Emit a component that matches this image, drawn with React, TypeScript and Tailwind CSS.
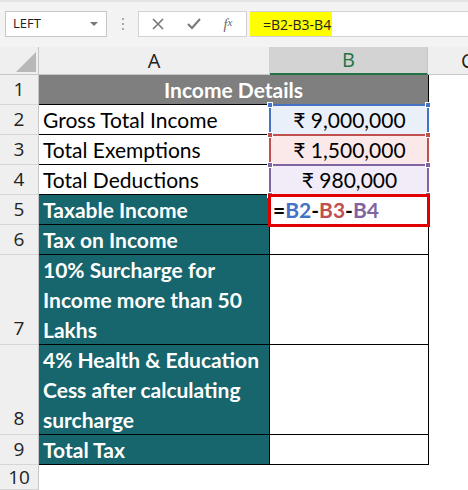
import React from "react";

const teal = "bg-[#17656d]";

function RowHead({ n, h, bottom }: { n: number; h: string; bottom?: boolean }) {
  return (
    <div
      className={`w-[39px] shrink-0 ${h} bg-[#efefef] border-r border-r-[#c6c6c6] border-b border-b-[#d6d6d6] flex justify-center ${
        bottom ? "items-end pb-[2px]" : "items-center"
      } text-[19px] text-[#222] font-['Open_Sans',sans-serif]`}
    >
      {n}
    </div>
  );
}

function Handle({ pos, color }: { pos: string; color: string }) {
  return <div className={`absolute w-[6px] h-[6px] ${pos} ${color} border border-white z-20`} />;
}

export default function App() {
  const cellFont = "font-['Lato','Carlito',sans-serif] text-[21px]";
  return (
    <div className="w-[468px] h-[490px] overflow-hidden bg-white">
      {/* Toolbar */}
      <div className="h-[47px] bg-[#f3f3f3] border-t-[2px] border-t-[#e4e4e4] flex items-start pt-[9px] font-['Open_Sans',sans-serif]">
        <div className="ml-[5px] w-[102px] h-[26px] bg-white border border-[#c6c6c6] flex items-center pl-[7px] pr-[8px] text-[13px] text-[#222]">
          <span className="flex-1">LEFT</span>
          <svg width="8" height="5" viewBox="0 0 8 5">
            <path d="M0 0 L8 0 L4 4 Z" fill="#777" />
          </svg>
        </div>
        <div className="w-[31px] h-[26px] flex flex-col items-center justify-center gap-[3px]">
          <div className="w-[2px] h-[2px] bg-[#aaa]" />
          <div className="w-[2px] h-[2px] bg-[#aaa]" />
          <div className="w-[2px] h-[2px] bg-[#aaa]" />
        </div>
        <div className="w-[109px] h-[26px] bg-white border border-[#d2d2d2] flex items-center text-[#666]">
          <div className="w-[38px] flex justify-center">
            <svg width="12" height="12" viewBox="0 0 12 12">
              <path d="M1 1 L11 11 M11 1 L1 11" stroke="#777" strokeWidth="1.6" />
            </svg>
          </div>
          <div className="w-[34px] flex justify-center">
            <svg width="14" height="12" viewBox="0 0 14 12">
              <path d="M1 6 L5 10 L13 1" stroke="#777" strokeWidth="2" fill="none" />
            </svg>
          </div>
          <div className="w-[34px] flex justify-center font-['Liberation_Serif',serif] italic text-[14px] text-[#666]">
            f<span className="text-[11px]">x</span>
          </div>
        </div>
        <div className="ml-[3px] flex-1 h-[26px] bg-white border-y border-y-[#d2d2d2] flex items-center">
          <div className="h-full w-[82px] bg-[#ffff00] flex items-center pl-[13px] text-[14px] text-[#222]">
            =B2-B3-B4
          </div>
        </div>
      </div>

      {/* Column headers */}
      <div className="flex h-[28px] font-['Open_Sans',sans-serif] text-[20px]">
        <div className="w-[39px] shrink-0 bg-[#efefef] border-r border-r-[#c6c6c6] border-b border-b-[#c6c6c6] relative">
          <svg className="absolute left-[16px] top-[5px]" width="20" height="20" viewBox="0 0 20 20">
            <path d="M20 0 L20 20 L0 20 Z" fill="#b8b8b8" />
          </svg>
        </div>
        <div className="w-[231px] shrink-0 bg-[#efefef] border-r border-r-[#d0d0d0] border-b border-b-[#c6c6c6] flex items-center justify-center text-[#222]">
          A
        </div>
        <div className="w-[158px] shrink-0 bg-[#d3d3d3] border-r border-r-[#c6c6c6] border-b-[2px] border-b-[#217346] flex items-center justify-center text-[#217346]">
          B
        </div>
        <div className="flex-1 bg-[#efefef] border-b border-b-[#c6c6c6] flex items-center pl-[33px] text-[#222]">
          C
        </div>
      </div>

      {/* Row 1 */}
      <div className="flex h-[30px]">
        <RowHead n={1} h="h-[30px]" />
        <div className={`w-[390px] shrink-0 bg-[#7f7f7f] border-b border-r border-black flex items-center justify-center text-white font-bold ${cellFont}`}>
          Income Details
        </div>
      </div>

      {/* Rows 2-4 */}
      {[
        { n: 2, label: "Gross Total Income", val: "₹ 9,000,000", bg: "bg-[#eaf0f9]", bd: "border-[#4472c4]", hc: "bg-[#4472c4]" },
        { n: 3, label: "Total Exemptions", val: "₹ 1,500,000", bg: "bg-[#fbe9e9]", bd: "border-[#c0504d]", hc: "bg-[#c0504d]" },
        { n: 4, label: "Total Deductions", val: "₹ 980,000", bg: "bg-[#f1ecf7]", bd: "border-[#8064a2]", hc: "bg-[#8064a2]" },
      ].map((r) => (
        <div key={r.n} className="flex h-[30px]">
          <RowHead n={r.n} h="h-[30px]" />
          <div className={`w-[231px] shrink-0 border-b border-r border-black flex items-center pl-[4px] text-black ${cellFont}`}>
            {r.label}
          </div>
          <div className={`w-[159px] shrink-0 relative ${r.bg} flex items-center justify-center text-black ${cellFont}`}>
            <div className={`absolute -left-[1px] -top-[1px] right-0 bottom-[-1px] border-2 ${r.bd} z-10`} />
            <Handle pos="-left-[3px] -top-[3px]" color={r.hc} />
            <Handle pos="-right-[2px] -top-[3px]" color={r.hc} />
            <Handle pos="-left-[3px] -bottom-[3px]" color={r.hc} />
            <Handle pos="-right-[2px] -bottom-[3px]" color={r.hc} />
            <span className="relative z-0">{r.val}</span>
          </div>
        </div>
      ))}

      {/* Row 5 */}
      <div className="flex h-[30px]">
        <RowHead n={5} h="h-[30px]" />
        <div className={`w-[231px] shrink-0 ${teal} border-b border-r border-black flex items-center pl-[4px] text-white font-bold ${cellFont}`}>
          Taxable Income
        </div>
        <div className={`w-[159px] shrink-0 relative flex items-center pl-[3px] font-bold ${cellFont}`}>
          <div className="absolute -left-[2px] -top-[1px] right-[-1px] bottom-[-2px] border-[3px] border-[#e00000] z-30" />
          <span className="text-black">=</span>
          <span className="text-[#4472c4]">B2</span>
          <span className="text-black">-</span>
          <span className="text-[#c0504d]">B3</span>
          <span className="text-black">-</span>
          <span className="text-[#8064a2]">B4</span>
        </div>
      </div>

      {/* Row 6 */}
      <div className="flex h-[30px]">
        <RowHead n={6} h="h-[30px]" />
        <div className={`w-[231px] shrink-0 ${teal} border-b border-r border-black flex items-center pl-[4px] text-white font-bold ${cellFont}`}>
          Tax on Income
        </div>
        <div className="w-[159px] shrink-0 border-b border-r border-black" />
      </div>

      {/* Row 7 */}
      <div className="flex h-[90px]">
        <RowHead n={7} h="h-[90px]" bottom />
        <div className={`w-[231px] shrink-0 ${teal} border-b border-r border-black flex flex-col justify-center pl-[4px] text-white font-bold leading-[30px] ${cellFont}`}>
          <div>10% Surcharge for</div>
          <div>Income more than 50</div>
          <div>Lakhs</div>
        </div>
        <div className="w-[159px] shrink-0 border-b border-r border-black" />
      </div>

      {/* Row 8 */}
      <div className="flex h-[90px]">
        <RowHead n={8} h="h-[90px]" bottom />
        <div className={`w-[231px] shrink-0 ${teal} border-b border-r border-black flex flex-col justify-center pl-[4px] text-white font-bold leading-[30px] ${cellFont}`}>
          <div>4% Health &amp; Education</div>
          <div>Cess after calculating</div>
          <div>surcharge</div>
        </div>
        <div className="w-[159px] shrink-0 border-b border-r border-black" />
      </div>

      {/* Row 9 */}
      <div className="flex h-[30px]">
        <RowHead n={9} h="h-[30px]" />
        <div className={`w-[231px] shrink-0 ${teal} border-b border-r border-black flex items-center pl-[4px] text-white font-bold ${cellFont}`}>
          Total Tax
        </div>
        <div className="w-[159px] shrink-0 border-b border-r border-black" />
      </div>

      {/* Row 10 */}
      <div className="flex h-[25px]">
        <RowHead n={10} h="h-[25px]" />
      </div>
    </div>
  );
}
